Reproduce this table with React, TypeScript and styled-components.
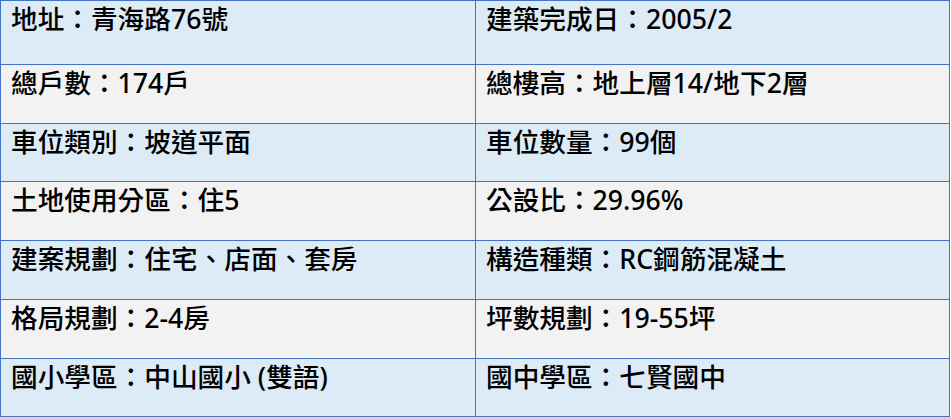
import React from "react";
import styled, { createGlobalStyle } from "styled-components";

const GlobalStyle = createGlobalStyle`
  html, body {
    margin: 0;
    padding: 0;
    background: #ffffff;
  }
  body {
    font-family: "Noto Sans", "Noto Sans CJK TC", sans-serif;
  }
`;

const Table = styled.div`
  width: 950px;
  box-sizing: border-box;
  border-left: 1px solid #4472c4;
  border-top: 1px solid #4472c4;
  display: flex;
  flex-direction: column;
`;

const Row = styled.div<{ $tone: "blue" | "gray"; $h: number }>`
  display: grid;
  grid-template-columns: 475px 474px;
  height: ${(p) => p.$h}px;
  background: ${(p) => (p.$tone === "blue" ? "#ddebf7" : "#f2f2f2")};
`;

const Cell = styled.div`
  box-sizing: border-box;
  border-right: 1px solid #4472c4;
  border-bottom: 1px solid #4472c4;
  padding: 2px 10px 0 10px;
  font-family: "Noto Sans", "Noto Sans CJK TC", sans-serif;
  font-size: 26.67px;
  font-weight: 500;
  line-height: 32px;
  color: #000000;
  white-space: nowrap;
  overflow: hidden;
`;

const rows: { left: string; right: string; h: number }[] = [
  { left: "地址：青海路76號", right: "建築完成日：2005/2", h: 64 },
  { left: "總戶數：174戶", right: "總樓高：地上層14/地下2層", h: 59 },
  { left: "車位類別：坡道平面", right: "車位數量：99個", h: 58 },
  { left: "土地使用分區：住5", right: "公設比：29.96%", h: 59 },
  { left: "建案規劃：住宅、店面、套房", right: "構造種類：RC鋼筋混凝土", h: 59 },
  { left: "格局規劃：2-4房", right: "坪數規劃：19-55坪", h: 59 },
  { left: "國小學區：中山國小 (雙語)", right: "國中學區：七賢國中", h: 58 },
];

export default function App() {
  return (
    <>
      <GlobalStyle />
      <Table>
        {rows.map((r, i) => (
          <Row key={i} $tone={i % 2 === 0 ? "blue" : "gray"} $h={r.h}>
            <Cell>{r.left}</Cell>
            <Cell>{r.right}</Cell>
          </Row>
        ))}
      </Table>
    </>
  );
}
